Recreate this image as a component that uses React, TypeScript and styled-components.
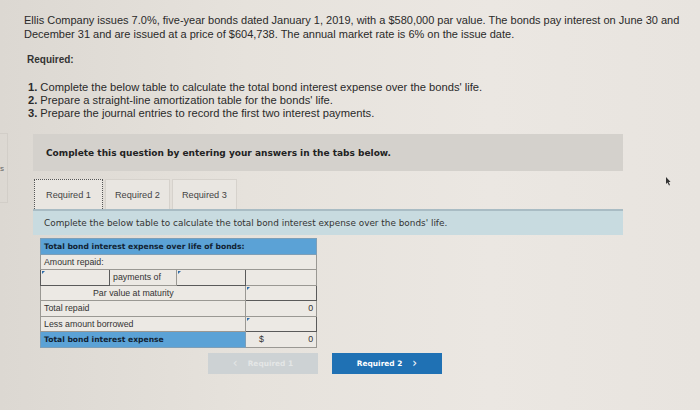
import React from 'react';
import styled, { createGlobalStyle } from 'styled-components';

const GlobalStyle = createGlobalStyle`
  html, body {
    margin: 0;
    height: 100%;
  }
  body {
    background: linear-gradient(90deg, #dcd8d2 0%, #e6e2dc 35%, #ebe7e2 70%, #e8e4df 100%);
    font-family: "Liberation Sans", Arial, sans-serif;
    color: #2a2a2a;
  }
`;

const Page = styled.div`
  width: 700px;
  height: 410px;
  box-sizing: border-box;
  padding: 13px 10px 0 24px;
  position: relative;
  overflow: hidden;
`;

const Intro = styled.p`
  margin: 0;
  font-size: 11px;
  line-height: 14px;
`;

const Heading = styled.h4`
  margin: 13px 0 0 3px;
  font-size: 10px;
  font-weight: bold;
  color: #333;
`;

const Steps = styled.ol`
  margin: 16px 0 0 4px;
  padding: 0;
  list-style: none;
  font-size: 11.2px;
  line-height: 13px;

  b {
    margin-right: 3px;
  }
`;

const Panel = styled.div`
  margin: 14px 0 0 9px;
  width: 590px;
`;

const Instructions = styled.div`
  background: #d4d1cc;
  height: 37px;
  display: flex;
  align-items: center;
  padding-left: 13px;
  font-family: Verdana, "DejaVu Sans", sans-serif;
  font-size: 9px;
  font-weight: bold;
  color: #222;
`;

const Tabs = styled.div`
  display: flex;
  gap: 2px;
  margin-top: 8px;
  padding-left: 1px;
`;

const Tab = styled.div<{ $active?: boolean }>`
  height: 30px;
  box-sizing: border-box;
  padding: 0 ${p => (p.$active ? 11 : 9)}px;
  display: flex;
  align-items: center;
  font-size: 9.2px;
  color: #444;
  background: #e9e6e1;
  border: ${p => (p.$active ? '1px dotted #555' : '1px solid #d6d2cc')};
  border-bottom: none;
`;

const SubHeader = styled.div`
  background: #c8dbe0;
  border-top: 2px solid #a9bcc4;
  height: 24px;
  display: flex;
  align-items: center;
  padding-left: 11px;
  font-family: Verdana, "DejaVu Sans", sans-serif;
  font-size: 8.9px;
  color: #333;
`;

const TableWrap = styled.div`
  padding: 3px 0 0 7px;
`;

const Grid = styled.table`
  border-collapse: collapse;
  width: 276px;
  table-layout: fixed;
  font-size: 8.8px;
  color: #333;

  td {
    height: 14.5px;
    padding: 0 3px;
    border: 1px solid #9a9893;
    background: #ece9e4;
    white-space: nowrap;
  }
`;

const HeadCell = styled.td`
  && {
    background: #5ba2d6;
    color: #123;
    font-weight: bold;
    font-family: Verdana, "DejaVu Sans", sans-serif;
    font-size: 7.6px;
    border-color: #7d9fb8;
  }
`;

const InputCell = styled.td`
  && {
    border: 1.5px solid #5a5a5a;
    position: relative;
  }
  &::before {
    content: '';
    position: absolute;
    left: 1px;
    top: 1px;
    border-left: 3px solid #2f6ca8;
    border-bottom: 3px solid transparent;
  }
`;

const NumCell = styled.td`
  && {
    text-align: right;
  }
  span {
    float: left;
    margin-left: 10px;
  }
`;

const Indent = styled.td<{ $pad: number }>`
  && {
    padding-left: ${p => p.$pad}px;
  }
`;

const Nav = styled.div`
  display: flex;
  gap: 14px;
  margin: 5px 0 0 175px;
`;

const NavButton = styled.button<{ $disabled?: boolean }>`
  width: 110px;
  height: 21px;
  border: none;
  background: ${p => (p.$disabled ? '#cdd2d4' : '#1f71b4')};
  color: ${p => (p.$disabled ? '#e4e6e6' : '#fff')};
  font-family: Verdana, "DejaVu Sans", sans-serif;
  font-size: 7.4px;
  font-weight: bold;
  display: flex;
  align-items: center;
  justify-content: center;
  gap: 10px;
  padding: 0;

  span {
    font-size: 12px;
    font-weight: normal;
  }
`;

const EdgeNote = styled.div`
  position: absolute;
  left: 0;
  top: 133px;
  width: 7px;
  height: 68px;
  border: 1px solid #d2cec8;
  border-left: none;
  font-size: 8px;
  color: #666;
  display: flex;
  align-items: center;
  overflow: hidden;
`;

const Cursor = styled.svg`
  position: absolute;
  left: 665px;
  top: 177px;
`;

export default function App() {
  return (
    <>
      <GlobalStyle />
      <Page>
        <EdgeNote>s</EdgeNote>
        <Cursor width="6" height="9" viewBox="0 0 6 9">
          <path d="M1 0 L1 7 L2.5 5.5 L4 8.5 L5 8 L3.6 5 L5.6 5 Z" fill="#333" />
        </Cursor>
        <Intro>
          Ellis Company issues 7.0%, five-year bonds dated January 1, 2019, with a $580,000 par value. The bonds pay interest on June 30 and
          December 31 and are issued at a price of $604,738. The annual market rate is 6% on the issue date.
        </Intro>
        <Heading>Required:</Heading>
        <Steps>
          <li><b>1.</b>Complete the below table to calculate the total bond interest expense over the bonds' life.</li>
          <li><b>2.</b>Prepare a straight-line amortization table for the bonds' life.</li>
          <li><b>3.</b>Prepare the journal entries to record the first two interest payments.</li>
        </Steps>
        <Panel>
          <Instructions>Complete this question by entering your answers in the tabs below.</Instructions>
          <Tabs>
            <Tab $active>Required 1</Tab>
            <Tab>Required 2</Tab>
            <Tab>Required 3</Tab>
          </Tabs>
          <SubHeader>Complete the below table to calculate the total bond interest expense over the bonds' life.</SubHeader>
          <TableWrap>
            <Grid>
              <colgroup>
                <col style={{ width: 69 }} />
                <col style={{ width: 67 }} />
                <col style={{ width: 69 }} />
                <col style={{ width: 71 }} />
              </colgroup>
              <tbody>
                <tr>
                  <HeadCell colSpan={4}>Total bond interest expense over life of bonds:</HeadCell>
                </tr>
                <tr>
                  <td colSpan={4}>Amount repaid:</td>
                </tr>
                <tr>
                  <InputCell />
                  <td>payments of</td>
                  <InputCell />
                  <td />
                </tr>
                <tr>
                  <Indent colSpan={3} $pad={52}>Par value at maturity</Indent>
                  <InputCell />
                </tr>
                <tr>
                  <td colSpan={3}>Total repaid</td>
                  <NumCell>0</NumCell>
                </tr>
                <tr>
                  <td colSpan={3}>Less amount borrowed</td>
                  <InputCell />
                </tr>
                <tr>
                  <HeadCell colSpan={3}>Total bond interest expense</HeadCell>
                  <NumCell><span>$</span>0</NumCell>
                </tr>
              </tbody>
            </Grid>
          </TableWrap>
          <Nav>
            <NavButton $disabled>
              <span>&lsaquo;</span>Required 1
            </NavButton>
            <NavButton>
              Required 2<span>&rsaquo;</span>
            </NavButton>
          </Nav>
        </Panel>
      </Page>
    </>
  );
}
